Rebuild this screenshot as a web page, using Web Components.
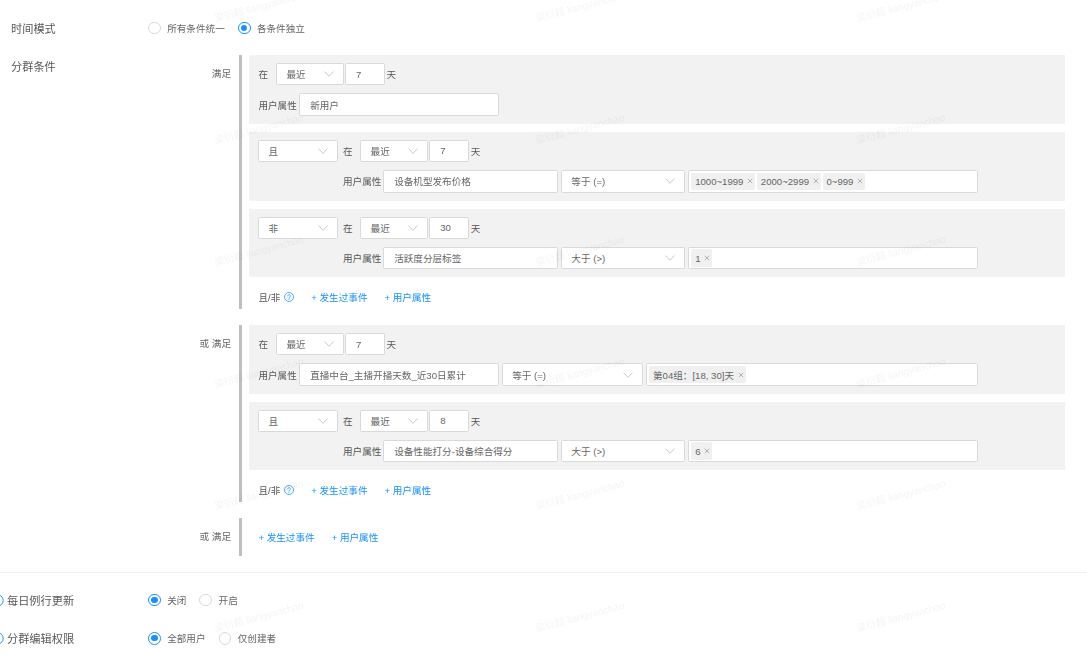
<!DOCTYPE html>
<html lang="zh">
<head>
<meta charset="utf-8">
<title>分群条件</title>
<style>
  html, body { margin: 0; height: 100%; overflow: hidden; background: #fff; }
  body {
    font-family: "Liberation Sans", "Noto Sans CJK SC", sans-serif;
    font-size: 9.6px;
    color: #595959;
  }
</style>
</head>
<body>
<seg-page>
  <form-row label="时间模式" style="--row-h:22.4px;margin-top:16.8px">
    <radio-group>
      <radio-item>所有条件统一</radio-item>
      <radio-item checked>各条件独立</radio-item>
    </radio-group>
  </form-row>

  <form-row label="分群条件" style="margin-top:15.8px">
    <div style="display:flex;flex-direction:column;gap:16px">
      <cond-group label="满足">
        <cond-box>
          <box-line><span>在</span><x-select style="width:68px;margin-left:7.8px">最近</x-select><x-input style="width:40px;margin-left:.8px">7</x-input><span style="margin-left:2px">天</span></box-line>
          <box-line><span>用户属性</span><x-input style="width:200px;margin-left:2px">新用户</x-input></box-line>
        </cond-box>
        <cond-box>
          <box-line><x-select style="width:80px;margin-left:-.6px;margin-right:5.2px">且</x-select><span>在</span><x-select style="width:68px;margin-left:7.4px">最近</x-select><x-input style="width:40px;margin-left:.8px">7</x-input><span style="margin-left:2px">天</span></box-line>
          <box-line indent><span>用户属性</span><x-input style="width:175px;margin-left:1.4px">设备机型发布价格</x-input><x-select style="width:124px;margin-left:3px">等于 (=)</x-select><tag-box style="width:290px;margin-left:3px"><x-tag>1000~1999</x-tag><x-tag>2000~2999</x-tag><x-tag>0~999</x-tag></tag-box></box-line>
        </cond-box>
        <cond-box>
          <box-line><x-select style="width:80px;margin-left:-.6px;margin-right:5.2px">非</x-select><span>在</span><x-select style="width:68px;margin-left:7.4px">最近</x-select><x-input style="width:40px;margin-left:.8px">30</x-input><span style="margin-left:2px">天</span></box-line>
          <box-line indent><span>用户属性</span><x-input style="width:175px;margin-left:1.4px">活跃度分层标签</x-input><x-select style="width:124px;margin-left:3px">大于 (&gt;)</x-select><tag-box style="width:290px;margin-left:3px"><x-tag>1</x-tag></tag-box></box-line>
        </cond-box>
        <add-links hint></add-links>
      </cond-group>

      <cond-group label="或 满足">
        <cond-box>
          <box-line><span>在</span><x-select style="width:68px;margin-left:7.8px">最近</x-select><x-input style="width:40px;margin-left:.8px">7</x-input><span style="margin-left:2px">天</span></box-line>
          <box-line><span>用户属性</span><x-input style="width:200px;margin-left:2px">直播中台_主播开播天数_近30日累计</x-input><x-select style="width:141px;margin-left:2.8px">等于 (=)</x-select><tag-box style="width:332px;margin-left:3px"><x-tag>第04组：[18, 30]天</x-tag></tag-box></box-line>
        </cond-box>
        <cond-box>
          <box-line><x-select style="width:80px;margin-left:-.6px;margin-right:5.2px">且</x-select><span>在</span><x-select style="width:68px;margin-left:7.4px">最近</x-select><x-input style="width:40px;margin-left:.8px">8</x-input><span style="margin-left:2px">天</span></box-line>
          <box-line indent><span>用户属性</span><x-input style="width:175px;margin-left:1.4px">设备性能打分-设备综合得分</x-input><x-select style="width:124px;margin-left:3px">大于 (&gt;)</x-select><tag-box style="width:290px;margin-left:3px"><x-tag>6</x-tag></tag-box></box-line>
        </cond-box>
        <add-links hint></add-links>
      </cond-group>

      <cond-group label="或 满足" center>
        <add-links style="height:38px"></add-links>
      </cond-group>
    </div>
  </form-row>

  <div style="height:1px;background:#f0f0f0;margin:16px -22px 0 -11px"></div>

  <form-row label="每日例行更新" help style="--row-h:22.4px;margin-top:15.8px">
    <radio-group>
      <radio-item checked>关闭</radio-item>
      <radio-item>开启</radio-item>
    </radio-group>
  </form-row>
  <form-row label="分群编辑权限" help style="--row-h:22.4px;margin-top:15.8px">
    <radio-group>
      <radio-item checked>全部用户</radio-item>
      <radio-item>仅创建者</radio-item>
    </radio-group>
  </form-row>
</seg-page>
<water-mark>梁衍超 liangyanchao</water-mark>

<script>
const HELP_ICON = `<svg viewBox="0 0 16 16" width="100%" height="100%" fill="none" stroke="#1890ff" stroke-width="1.2">
  <circle cx="8" cy="8" r="7.2"/>
  <path d="M5.8 6.3a2.2 2.2 0 1 1 3.4 1.9c-.8.5-1.2.9-1.2 1.8" stroke-linecap="round"/>
  <circle cx="8" cy="12" r=".5" fill="#1890ff" stroke-width=".5"/>
</svg>`;

class SegPage extends HTMLElement {
  constructor() {
    super();
    this.attachShadow({mode: 'open'}).innerHTML = `
    <style>
      :host { display: block; padding: 0 22px 0 11px; filter: blur(.3px); }
    </style>
    <slot></slot>`;
  }
}

class FormRow extends HTMLElement {
  constructor() {
    super();
    const help = this.hasAttribute('help') ? `<span class="help">${HELP_ICON}</span>` : '';
    this.attachShadow({mode: 'open'}).innerHTML = `
    <style>
      :host { display: grid; grid-template-columns: 137px 1fr; }
      .label {
        display: flex;
        align-items: center;
        height: var(--row-h, 22.4px);
        font-size: 11.2px;
        color: #595959;
      }
      .help { width: 12.8px; height: 12.8px; margin: 0 3.2px 0 -20px; flex: none; }
      .help svg { display: block; }
    </style>
    <div class="label">${help}<span>${this.getAttribute('label')}</span></div>
    <div><slot></slot></div>`;
  }
}

class RadioGroup extends HTMLElement {
  constructor() {
    super();
    this.attachShadow({mode: 'open'}).innerHTML = `
    <style>
      :host { display: flex; align-items: center; gap: 13px; height: 22.4px; }
    </style>
    <slot></slot>`;
  }
}

class RadioItem extends HTMLElement {
  constructor() {
    super();
    this.attachShadow({mode: 'open'}).innerHTML = `
    <style>
      :host { display: inline-flex; align-items: center; gap: 6.4px; color: #666; }
      .ring {
        box-sizing: border-box;
        width: 12.8px;
        height: 12.8px;
        border: 1px solid #d9d9d9;
        border-radius: 50%;
        background: #fff;
        display: flex;
        align-items: center;
        justify-content: center;
      }
      :host([checked]) .ring { border-color: #1890ff; }
      :host([checked]) .ring::after {
        content: '';
        width: 6.4px;
        height: 6.4px;
        border-radius: 50%;
        background: #1890ff;
      }
    </style>
    <span class="ring"></span><slot></slot>`;
  }
}

class CondGroup extends HTMLElement {
  constructor() {
    super();
    this.attachShadow({mode: 'open'}).innerHTML = `
    <style>
      :host { display: grid; grid-template-columns: 83px 1fr; }
      .label { height: 38.4px; line-height: 38.4px; text-align: right; color: #666; }
      :host([center]) .label { height: 38px; line-height: 38px; }
      .body {
        margin-left: 8px;
        border-left: 3.6px solid #bfbfbf;
        padding-left: 7.4px;
        display: flex;
        flex-direction: column;
        gap: 8px;
      }
    </style>
    <div class="label">${this.getAttribute('label')}</div>
    <div class="body"><slot></slot></div>`;
  }
}

class CondBox extends HTMLElement {
  constructor() {
    super();
    this.attachShadow({mode: 'open'}).innerHTML = `
    <style>
      :host {
        display: flex;
        flex-direction: column;
        gap: 8px;
        padding: 8px 8px 8px 9px;
        background: #f2f2f2;
      }
    </style>
    <slot></slot>`;
  }
}

class BoxLine extends HTMLElement {
  constructor() {
    super();
    this.attachShadow({mode: 'open'}).innerHTML = `
    <style>
      :host { display: flex; align-items: center; height: 22.4px; color: #595959; white-space: nowrap; }
      :host([indent]) { padding-left: 84.6px; }
    </style>
    <slot></slot>`;
  }
}

class XSelect extends HTMLElement {
  constructor() {
    super();
    this.attachShadow({mode: 'open'}).innerHTML = `
    <style>
      :host {
        box-sizing: border-box;
        display: flex;
        align-items: center;
        justify-content: space-between;
        height: 22.4px;
        padding: 0 9px 0 9.6px;
        background: #fff;
        border: 1px solid #d9d9d9;
        border-radius: 1.6px;
        color: #666;
        flex: none;
      }
      svg { display: block; }
    </style>
    <span><slot></slot></span>
    <svg width="10" height="6" viewBox="0 0 10 6" fill="none" stroke="#c4c4c4" stroke-width=".9"><path d="M.5.5 5 5.3 9.5.5"/></svg>`;
  }
}

class XInput extends HTMLElement {
  constructor() {
    super();
    this.attachShadow({mode: 'open'}).innerHTML = `
    <style>
      :host {
        box-sizing: border-box;
        display: flex;
        align-items: center;
        height: 22.4px;
        padding: 0 10.4px;
        background: #fff;
        border: 1px solid #d9d9d9;
        border-radius: 1.6px;
        color: #666;
        flex: none;
      }
    </style>
    <slot></slot>`;
  }
}

class TagBox extends HTMLElement {
  constructor() {
    super();
    this.attachShadow({mode: 'open'}).innerHTML = `
    <style>
      :host {
        box-sizing: border-box;
        display: flex;
        align-items: center;
        gap: 1.8px;
        height: 22.4px;
        padding: 0 2.4px;
        background: #fff;
        border: 1px solid #d9d9d9;
        border-radius: 1.6px;
        flex: none;
      }
    </style>
    <slot></slot>`;
  }
}

class XTag extends HTMLElement {
  constructor() {
    super();
    this.attachShadow({mode: 'open'}).innerHTML = `
    <style>
      :host {
        display: inline-flex;
        align-items: center;
        gap: 3.6px;
        height: 17.6px;
        padding: 0 2px 0 4px;
        background: #f0f0f0;
        border-radius: 1.6px;
        color: #666;
      }
      svg { display: block; }
    </style>
    <slot></slot>
    <svg width="6" height="6" viewBox="0 0 6 6" stroke="#aaa" stroke-width=".9"><path d="M.8.8l4.4 4.4M5.2.8.8 5.2"/></svg>`;
  }
}

class AddLinks extends HTMLElement {
  constructor() {
    super();
    const hint = this.hasAttribute('hint')
      ? `<span class="hint">且/非<span class="q">${HELP_ICON}</span></span>` : '';
    this.attachShadow({mode: 'open'}).innerHTML = `
    <style>
      :host {
        display: flex;
        align-items: center;
        gap: 17px;
        height: 23.6px;
        padding-left: 9px;
        color: #1890ff;
      }
      .hint { display: inline-flex; align-items: center; gap: 4px; color: #595959; }
      .q { display: block; width: 10px; height: 10px; }
      .q svg { display: block; }
    </style>
    ${hint}<span>+ 发生过事件</span><span>+ 用户属性</span>`;
  }
}

// 水印铺满整页，盖在内容上方
class WaterMark extends HTMLElement {
  constructor() {
    super();
    const text = this.textContent.trim();
    this.textContent = '';
    let cells = '';
    for (let i = 0; i < 18; i++) cells += `<span>${text}</span>`;
    this.attachShadow({mode: 'open'}).innerHTML = `
    <style>
      :host {
        position: fixed;
        left: 216px;
        top: -98px;
        display: grid;
        grid-template-columns: repeat(3, 321px);
        grid-auto-rows: 122px;
        pointer-events: none;
        filter: blur(.3px);
      }
      span {
        align-self: end;
        justify-self: start;
        font-size: 10px;
        line-height: 1;
        white-space: nowrap;
        color: rgba(0, 0, 0, .05);
        transform: rotate(-15deg);
        transform-origin: 0 100%;
      }
    </style>
    ${cells}`;
  }
}

customElements.define('seg-page', SegPage);
customElements.define('form-row', FormRow);
customElements.define('radio-group', RadioGroup);
customElements.define('radio-item', RadioItem);
customElements.define('cond-group', CondGroup);
customElements.define('cond-box', CondBox);
customElements.define('box-line', BoxLine);
customElements.define('x-select', XSelect);
customElements.define('x-input', XInput);
customElements.define('tag-box', TagBox);
customElements.define('x-tag', XTag);
customElements.define('add-links', AddLinks);
customElements.define('water-mark', WaterMark);
</script>
</body>
</html>
